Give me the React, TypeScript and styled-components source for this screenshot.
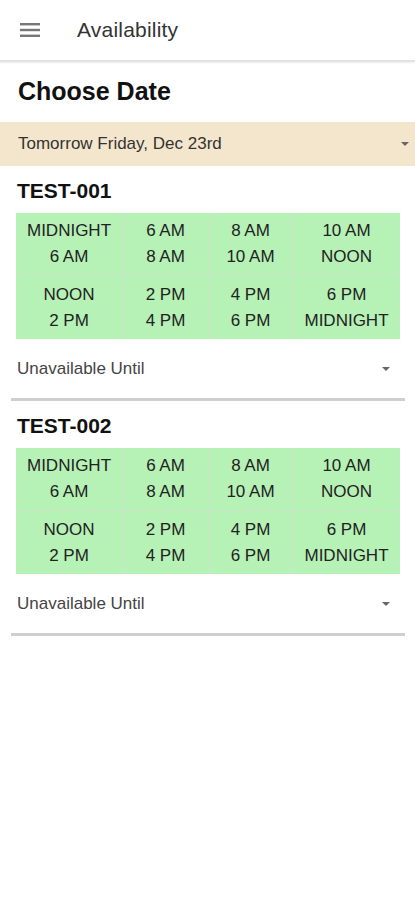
import React from "react";
import styled, { createGlobalStyle } from "styled-components";

const GlobalStyle = createGlobalStyle`
  body {
    margin: 0;
    background: #ffffff;
    font-family: "Liberation Sans", Arial, sans-serif;
  }
`;

const Page = styled.div`
  width: 415px;
  min-height: 900px;
  background: #fff;
`;

const Header = styled.header`
  height: 60px;
  display: flex;
  align-items: center;
  padding-left: 20px;
  border-bottom: 2px solid #e2e2e2;
  box-shadow: 0 1px 2px rgba(0, 0, 0, 0.08);
`;

const MenuIcon = styled.svg`
  width: 20px;
  height: 14px;
  display: block;
`;

const HeaderTitle = styled.h1`
  margin: 0 0 0 37px;
  font-size: 21px;
  font-weight: 400;
  color: #333;
  letter-spacing: 0.2px;
`;

const PageTitle = styled.h2`
  margin: 0;
  padding: 14px 18px 15px;
  font-size: 25px;
  line-height: 31px;
  font-weight: 700;
  color: #111;
`;

const DateBar = styled.div`
  height: 44px;
  display: flex;
  align-items: center;
  justify-content: space-between;
  padding: 0 6px 0 18px;
  background: #f3e6cd;
  font-size: 17px;
  color: #333;
`;

const Caret = styled.span`
  width: 0;
  height: 0;
  border-left: 4px solid transparent;
  border-right: 4px solid transparent;
  border-top: 4px solid #666;
`;

const Device = styled.section`
  padding: 12px 15px 0 16px;
`;

const DeviceName = styled.h3`
  margin: 0 0 9px 1px;
  font-size: 21px;
  line-height: 26px;
  font-weight: 700;
  color: #111;
`;

const SlotGrid = styled.div`
  display: grid;
  grid-template-columns: 107fr 86fr 84fr 107fr;
  grid-auto-rows: 63px;
  background: #b6f1b6;
`;

const Slot = styled.div<{ $lastCol: boolean; $lastRow: boolean }>`
  display: flex;
  flex-direction: column;
  align-items: center;
  justify-content: center;
  font-size: 17px;
  line-height: 26px;
  color: #222;
  border-right: ${(p) => (p.$lastCol ? "none" : "1px solid #cde3cd")};
  border-bottom: ${(p) => (p.$lastRow ? "none" : "1px solid #cde3cd")};
`;

const UnavailableRow = styled.div`
  height: 59px;
  display: flex;
  align-items: center;
  justify-content: space-between;
  padding: 0 10px 0 1px;
  font-size: 17px;
  color: #444;
`;

const Divider = styled.div`
  height: 3px;
  margin: 0 -5px 0 -5px;
  background: #cfcfcf;
`;

const slots: [string, string][] = [
  ["MIDNIGHT", "6 AM"],
  ["6 AM", "8 AM"],
  ["8 AM", "10 AM"],
  ["10 AM", "NOON"],
  ["NOON", "2 PM"],
  ["2 PM", "4 PM"],
  ["4 PM", "6 PM"],
  ["6 PM", "MIDNIGHT"],
];

const devices = ["TEST-001", "TEST-002"];

const App = () => {
  return (
    <Page>
      <GlobalStyle />
      <Header>
        <MenuIcon viewBox="0 0 20 14">
          <rect x="0" y="0" width="20" height="2.4" fill="#777" />
          <rect x="0" y="5.8" width="20" height="2.4" fill="#777" />
          <rect x="0" y="11.6" width="20" height="2.4" fill="#777" />
        </MenuIcon>
        <HeaderTitle>Availability</HeaderTitle>
      </Header>

      <PageTitle>Choose Date</PageTitle>
      <DateBar>
        <span>Tomorrow Friday, Dec 23rd</span>
        <Caret />
      </DateBar>

      {devices.map((name) => (
        <Device key={name}>
          <DeviceName>{name}</DeviceName>
          <SlotGrid>
            {slots.map(([from, to], i) => (
              <Slot key={i} $lastCol={i % 4 === 3} $lastRow={i >= 4}>
                <span>{from}</span>
                <span>{to}</span>
              </Slot>
            ))}
          </SlotGrid>
          <UnavailableRow>
            <span>Unavailable Until</span>
            <Caret />
          </UnavailableRow>
          <Divider />
        </Device>
      ))}
    </Page>
  );
};

export default App;
